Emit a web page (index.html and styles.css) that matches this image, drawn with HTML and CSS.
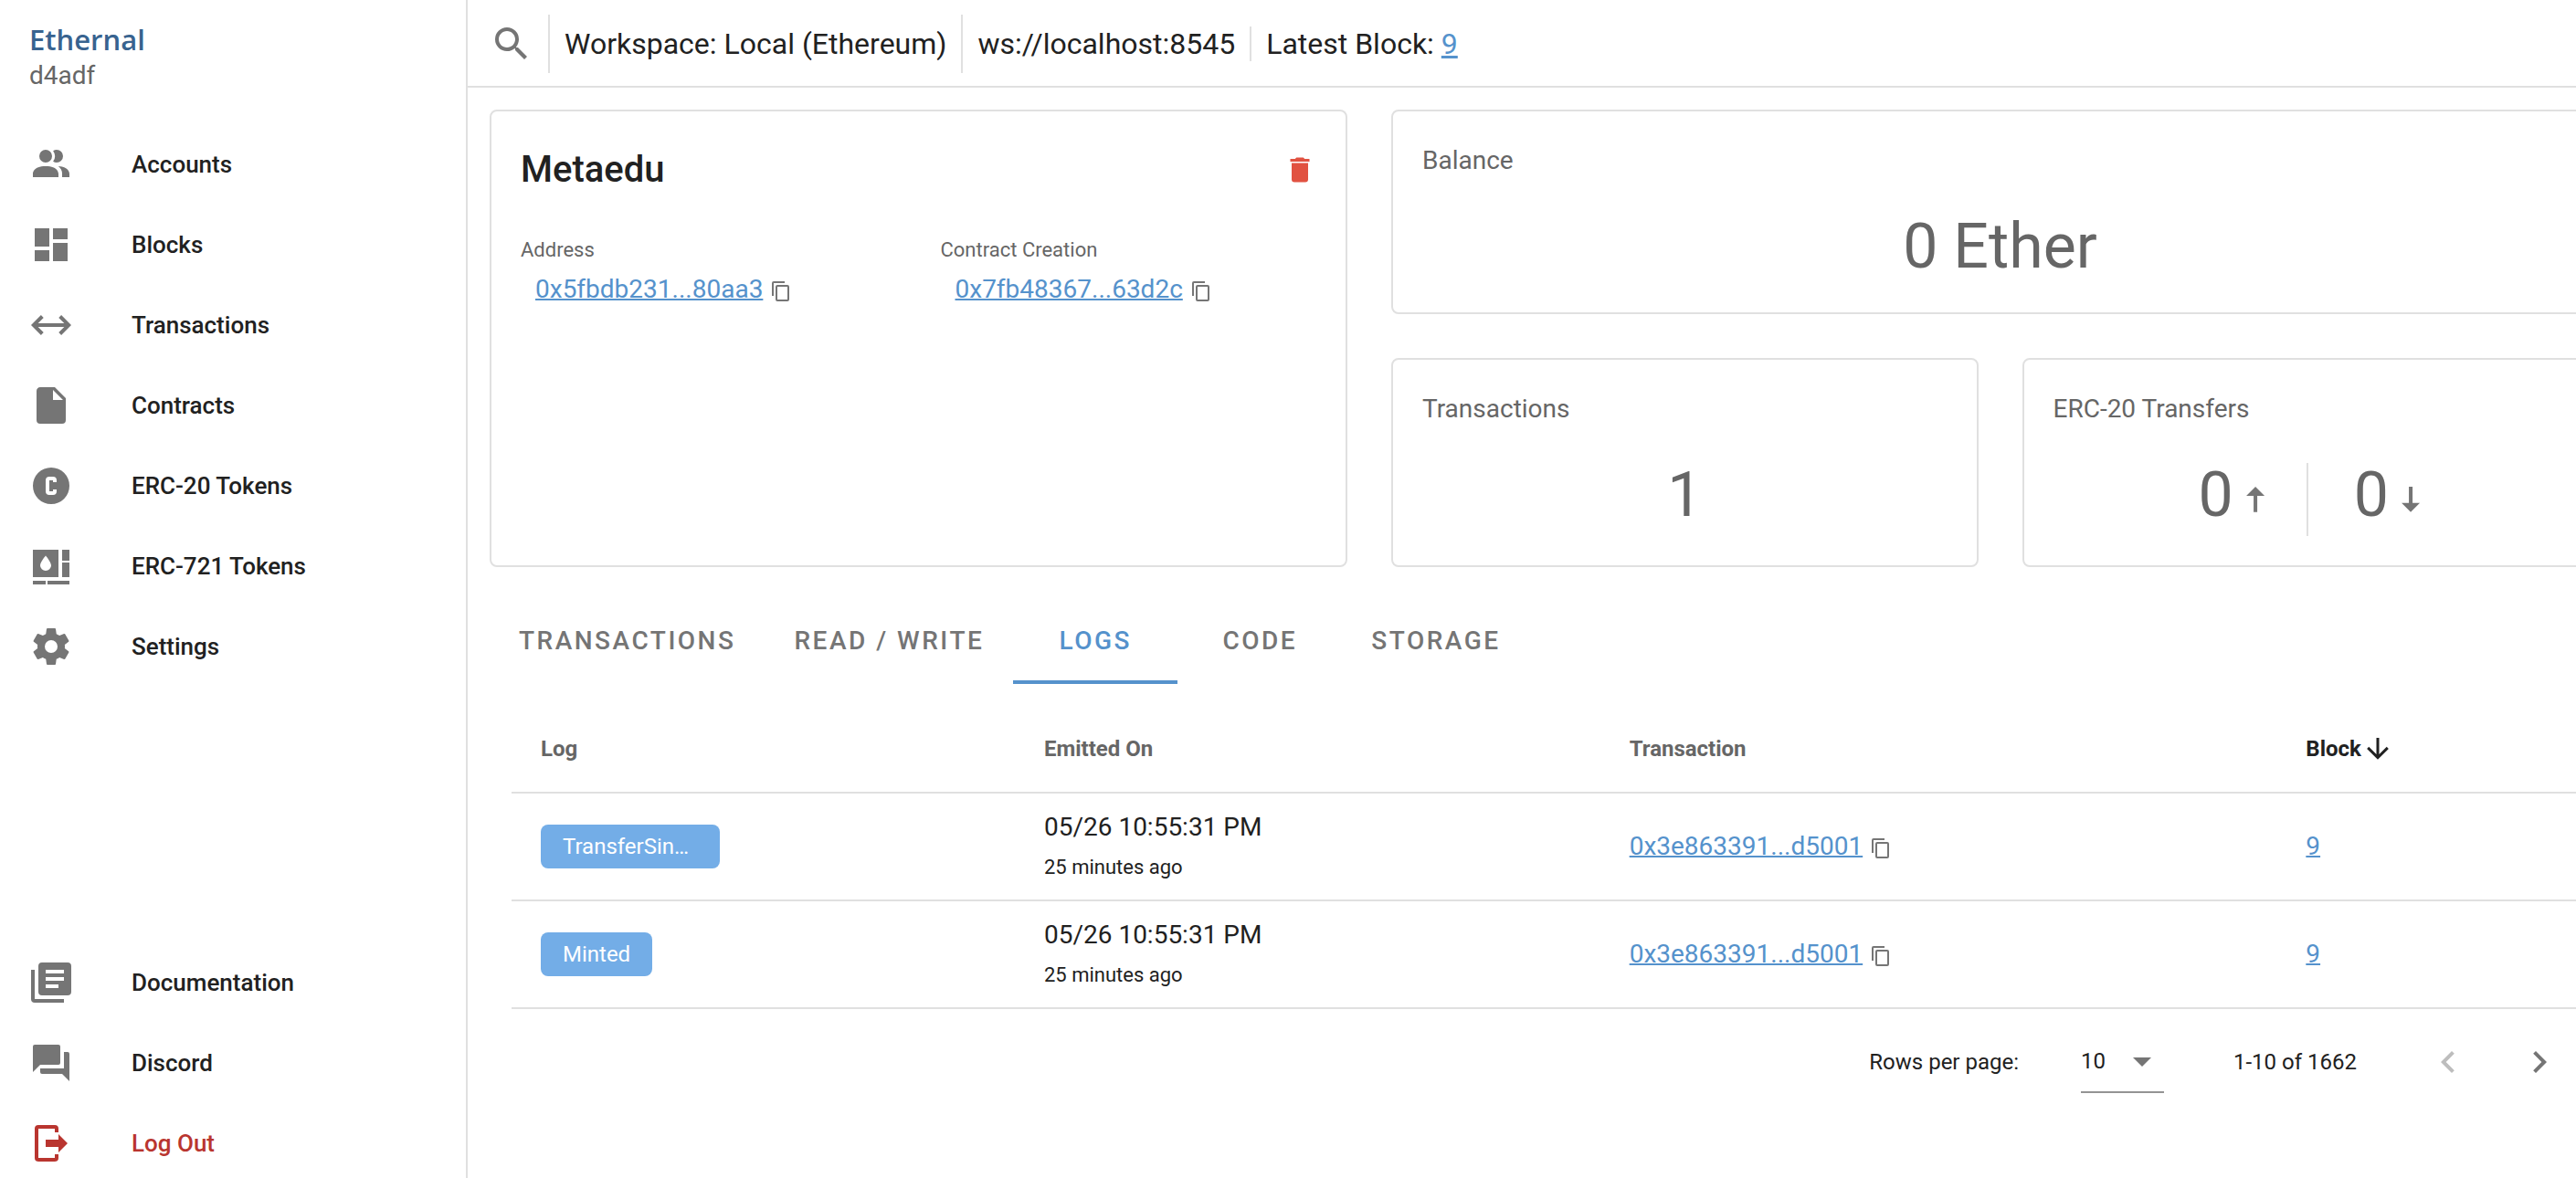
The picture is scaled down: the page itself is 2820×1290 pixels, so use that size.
FILE: index.html
```html
<!DOCTYPE html>
<html lang="en">
<head>
<meta charset="utf-8">
<meta name="viewport" content="width=device-width, initial-scale=1">
<title>Ethernal</title>
<link rel="stylesheet" href="styles.css">
</head>
<body>
<svg class="sprite" aria-hidden="true">
  <symbol id="i-copy" viewBox="0 0 24 24"><path d="M19,21H8V7H19M19,5H8A2,2 0 0,0 6,7V21A2,2 0 0,0 8,23H19A2,2 0 0,0 21,21V7A2,2 0 0,0 19,5M16,1H4A2,2 0 0,0 2,3V17H4V3H16V1Z"/></symbol>
</svg>
<div class="app">
  <aside class="sidebar">
    <div class="brand">
      <div class="brand-name">Ethernal</div>
      <div class="brand-version">d4adf</div>
    </div>
    <nav class="nav">
      <a class="nav-item" href="#accounts"><svg class="icon" viewBox="0 0 24 24"><path d="M16 17V19H2V17S2 13 9 13 16 17 16 17M12.5 7.5A3.5 3.5 0 1 0 9 11A3.5 3.5 0 0 0 12.5 7.5M15.94 13A5.32 5.32 0 0 1 18 17V19H22V17S22 13.37 15.94 13M15 4A3.39 3.39 0 0 0 13.07 4.59A5 5 0 0 1 13.07 10.41A3.39 3.39 0 0 0 15 11A3.5 3.5 0 0 0 15 4Z"/></svg>Accounts</a>
      <a class="nav-item" href="#blocks"><svg class="icon" viewBox="0 0 24 24"><path d="M13,3V9H21V3M13,21H21V11H13M3,21H11V15H3M3,13H11V3H3V13Z"/></svg>Blocks</a>
      <a class="nav-item" href="#transactions"><svg class="icon" viewBox="0 0 24 24"><path d="M6.45,17.45L1,12L6.45,6.55L7.86,7.96L4.83,11H19.17L16.14,7.96L17.55,6.55L23,12L17.55,17.45L16.14,16.04L19.17,13H4.83L7.86,16.04L6.45,17.45Z"/></svg>Transactions</a>
      <a class="nav-item" href="#contracts"><svg class="icon" viewBox="0 0 24 24"><path d="M13,9V3.5L18.5,9M6,2C4.89,2 4,2.89 4,4V20A2,2 0 0,0 6,22H18A2,2 0 0,0 20,20V8L14,2H6Z"/></svg>Contracts</a>
      <a class="nav-item" href="#erc20"><svg class="icon" viewBox="0 0 24 24"><path d="M11,7A2,2 0 0,0 9,9V15A2,2 0 0,0 11,17H13A2,2 0 0,0 15,15V14H13V15H11V9H13V10H15V9A2,2 0 0,0 13,7H11M12,2A10,10 0 0,1 22,12A10,10 0 0,1 12,22A10,10 0 0,1 2,12A10,10 0 0,1 12,2Z"/></svg>ERC-20 Tokens</a>
      <a class="nav-item" href="#erc721"><svg class="icon" viewBox="0 0 24 24"><path fill-rule="evenodd" d="M2,3H16V18H2V3M9,6.2C9,6.2 6,9.6 6,11.6A3,2.9 0 0,0 12,11.6C12,9.6 9,6.2 9,6.2M18,3H22V9H18V3M18,10H22V18H18V10M2,20H9V22H2V20M10,20H22V22H10V20Z"/></svg>ERC-721 Tokens</a>
      <a class="nav-item" href="#settings"><svg class="icon" viewBox="0 0 24 24"><path d="M12,15.5A3.5,3.5 0 0,1 8.5,12A3.5,3.5 0 0,1 12,8.5A3.5,3.5 0 0,1 15.5,12A3.5,3.5 0 0,1 12,15.5M19.43,12.97C19.47,12.65 19.5,12.33 19.5,12C19.5,11.67 19.47,11.34 19.43,11L21.54,9.37C21.73,9.22 21.78,8.95 21.66,8.73L19.66,5.27C19.54,5.05 19.27,4.96 19.05,5.05L16.56,6.05C16.04,5.66 15.5,5.32 14.87,5.07L14.5,2.42C14.46,2.18 14.25,2 14,2H10C9.75,2 9.54,2.18 9.5,2.42L9.13,5.07C8.5,5.32 7.96,5.66 7.44,6.05L4.95,5.05C4.73,4.96 4.46,5.05 4.34,5.27L2.34,8.73C2.21,8.95 2.27,9.22 2.46,9.37L4.57,11C4.53,11.34 4.5,11.67 4.5,12C4.5,12.33 4.53,12.65 4.57,12.97L2.46,14.63C2.27,14.78 2.21,15.05 2.34,15.27L4.34,18.73C4.46,18.95 4.73,19.03 4.95,18.95L7.44,17.94C7.96,18.34 8.5,18.68 9.13,18.93L9.5,21.58C9.54,21.82 9.75,22 10,22H14C14.25,22 14.46,21.82 14.5,21.58L14.87,18.93C15.5,18.67 16.04,18.34 16.56,17.94L19.05,18.95C19.27,19.03 19.54,18.95 19.66,18.73L21.66,15.27C21.78,15.05 21.73,14.78 21.54,14.63L19.43,12.97Z"/></svg>Settings</a>
    </nav>
    <nav class="nav nav-bottom">
      <a class="nav-item" href="#docs"><svg class="icon" viewBox="0 0 24 24"><path fill-rule="evenodd" d="M3,5V21H19V23H3A2,2 0 0,1 1,21V5H3M7,1H21A2,2 0 0,1 23,3V17A2,2 0 0,1 21,19H7A2,2 0 0,1 5,17V3A2,2 0 0,1 7,1M9,5V7H19V5H9M9,9V11H19V9H9M9,13V15H16V13H9Z"/></svg>Documentation</a>
      <a class="nav-item" href="#discord"><svg class="icon" viewBox="0 0 24 24"><path d="M17,12V3A1,1 0 0,0 16,2H3A1,1 0 0,0 2,3V17L6,13H16A1,1 0 0,0 17,12M21,6H19V15H6V17A1,1 0 0,0 7,18H18L22,22V7A1,1 0 0,0 21,6Z"/></svg>Discord</a>
      <a class="nav-item nav-item-danger" href="#logout"><svg class="icon" viewBox="0 0 24 24"><path d="M16,17V14H9V10H16V7L21,12L16,17M14,2A2,2 0 0,1 16,4V6H14V4H5V20H14V18H16V20A2,2 0 0,1 14,22H5A2,2 0 0,1 3,20V4A2,2 0 0,1 5,2H14Z"/></svg>Log Out</a>
    </nav>
  </aside>

  <div class="page">
    <header class="topbar">
      <button class="icon-button" type="button" aria-label="Search"><svg class="icon" viewBox="0 0 24 24"><path d="M9.5,3A6.5,6.5 0 0,1 16,9.5C16,11.11 15.41,12.59 14.44,13.73L14.71,14H15.5L20.5,19L19,20.5L14,15.5V14.71L13.73,14.44C12.59,15.41 11.11,16 9.5,16A6.5,6.5 0 0,1 3,9.5A6.5,6.5 0 0,1 9.5,3M9.5,5C7,5 5,7 5,9.5C5,12 7,14 9.5,14C12,14 14,12 14,9.5C14,7 12,5 9.5,5Z"/></svg></button>
      <span class="divider"></span>
      <span>Workspace: Local (Ethereum)</span>
      <span class="divider"></span>
      <span>ws://localhost:8545</span>
      <span class="divider divider-short"></span>
      <span>Latest Block: <a class="latest" href="#block-9">9</a></span>
    </header>

    <main class="content">
      <section class="overview">
        <article class="card">
          <div class="card-head">
            <h1 class="card-title">Metaedu</h1>
            <button class="icon-button delete" type="button" aria-label="Delete contract"><svg class="icon icon-md" viewBox="0 0 24 24"><path d="M19,4H15.5L14.5,3H9.5L8.5,4H5V6H19M6,19A2,2 0 0,0 8,21H16A2,2 0 0,0 18,19V7H6V19Z"/></svg></button>
          </div>
          <dl class="facts">
            <div>
              <dt>Address</dt>
              <dd><a href="#address">0x5fbdb231...80aa3</a><button class="icon-button copy" type="button" aria-label="Copy address"><svg class="icon icon-sm"><use href="#i-copy"/></svg></button></dd>
            </div>
            <div>
              <dt>Contract Creation</dt>
              <dd><a href="#creation">0x7fb48367...63d2c</a><button class="icon-button copy" type="button" aria-label="Copy transaction hash"><svg class="icon icon-sm"><use href="#i-copy"/></svg></button></dd>
            </div>
          </dl>
        </article>
        <div class="stats">
          <article class="card stat-wide">
            <h2 class="stat-label">Balance</h2>
            <div class="stat-value">0 Ether</div>
          </article>
          <article class="card">
            <h2 class="stat-label">Transactions</h2>
            <div class="stat-value">1</div>
          </article>
          <article class="card">
            <h2 class="stat-label">ERC-20 Transfers</h2>
            <div class="stat-value">
              <span>0</span><svg class="icon stat-icon" viewBox="0 0 24 24"><path d="M7.03,9.97H11.03V18.89L13.04,18.92V9.97H17.03L12.03,4.97Z"/></svg>
              <span class="stat-divider"></span>
              <span>0</span><svg class="icon stat-icon" viewBox="0 0 24 24"><path d="M7.03,13.92H11.03V5L13.04,4.97V13.92H17.03L12.03,18.92Z"/></svg>
            </div>
          </article>
        </div>
      </section>

      <div class="tabs" role="tablist">
        <button class="tab" type="button" role="tab">TRANSACTIONS</button>
        <button class="tab" type="button" role="tab">READ / WRITE</button>
        <button class="tab tab-active" type="button" role="tab" aria-selected="true">LOGS</button>
        <button class="tab" type="button" role="tab">CODE</button>
        <button class="tab" type="button" role="tab">STORAGE</button>
      </div>

      <section class="logs">
        <table class="log-table">
          <colgroup><col class="col-log"><col class="col-date"><col class="col-tx"><col></colgroup>
          <thead>
            <tr>
              <th scope="col">Log</th>
              <th scope="col">Emitted On</th>
              <th scope="col">Transaction</th>
              <th scope="col" class="sorted" aria-sort="descending"><span class="sort">Block<svg class="icon icon-md" viewBox="0 0 24 24"><path d="M11,4H13V16L18.5,10.5L19.92,11.92L12,19.84L4.08,11.92L5.5,10.5L11,16V4Z"/></svg></span></th>
            </tr>
          </thead>
          <tbody>
            <tr>
              <td><span class="chip chip-long">TransferSin…</span></td>
              <td class="date">05/26 10:55:31 PM<div class="ago">25 minutes ago</div></td>
              <td><a href="#tx-1">0x3e863391...d5001</a><button class="icon-button copy" type="button" aria-label="Copy transaction hash"><svg class="icon icon-sm"><use href="#i-copy"/></svg></button></td>
              <td><a href="#block-9">9</a></td>
            </tr>
            <tr>
              <td><span class="chip">Minted</span></td>
              <td class="date">05/26 10:55:31 PM<div class="ago">25 minutes ago</div></td>
              <td><a href="#tx-2">0x3e863391...d5001</a><button class="icon-button copy" type="button" aria-label="Copy transaction hash"><svg class="icon icon-sm"><use href="#i-copy"/></svg></button></td>
              <td><a href="#block-9">9</a></td>
            </tr>
          </tbody>
        </table>
        <footer class="pager">
          <label for="rows">Rows per page:</label>
          <div class="select">
            <select id="rows"><option>10</option><option>25</option><option>50</option></select>
            <svg class="icon select-arrow" viewBox="0 0 24 24"><path d="M7,10L12,15L17,10H7Z"/></svg>
          </div>
          <span class="range">1-10 of 1662</span>
          <button class="icon-button page-button" type="button" disabled aria-label="Previous page"><svg class="icon" viewBox="0 0 24 24"><path d="M15.41,16.58L10.83,12L15.41,7.41L14,6L8,12L14,18L15.41,16.58Z"/></svg></button>
          <button class="icon-button page-button" type="button" aria-label="Next page"><svg class="icon" viewBox="0 0 24 24"><path d="M8.59,16.58L13.17,12L8.59,7.41L10,6L16,12L10,18L8.59,16.58Z"/></svg></button>
        </footer>
      </section>
    </main>
  </div>
</div>
</body>
</html>
```
FILE: styles.css
```css
:root {
  --text: #212121;
  --muted: #666666;
  --icon: #757575;
  --line: #e0e0e0;
  --primary: #5592cc;
}

* {
  box-sizing: border-box;
}

body {
  margin: 0;
  background: #fff;
  color: var(--text);
  font-family: Roboto, "Liberation Sans", sans-serif;
  font-size: 28px;
  line-height: 44px;
}

h1, h2, dl, dd {
  margin: 0;
}

a {
  color: var(--primary);
  text-decoration-thickness: 2px;
}

button, select {
  font: inherit;
  color: inherit;
}

.sprite {
  display: none;
}

.icon {
  display: block;
  flex: none;
  width: 48px;
  height: 48px;
  fill: currentColor;
}

.icon-md {
  width: 36px;
  height: 36px;
}

.icon-sm {
  width: 24px;
  height: 24px;
}

.icon-button {
  display: inline-flex;
  padding: 0;
  border: 0;
  background: none;
  color: var(--icon);
}

.app {
  display: flex;
  min-height: 100vh;
}

/* Sidebar */

.sidebar {
  display: flex;
  flex-direction: column;
  flex: none;
  width: 512px;
  border-right: 2px solid var(--line);
}

.brand {
  padding: 23px 32px 39px;
  line-height: 40px;
}

.brand-name {
  color: #38638f;
  font-family: "Open Sans", "Noto Sans", sans-serif;
  font-size: 31px;
  font-weight: 600;
}

.brand-version {
  color: var(--muted);
}

.nav {
  display: flex;
  flex-direction: column;
  gap: 12px;
}

.nav-bottom {
  margin-top: auto;
}

.nav-item {
  display: flex;
  align-items: center;
  gap: 64px;
  height: 76px;
  padding: 0 32px;
  color: var(--text);
  font-size: 26px;
  font-weight: 500;
  text-decoration: none;
}

.nav-item .icon {
  color: var(--icon);
}

.nav-item-danger,
.nav-item-danger .icon {
  color: #b9352f;
}

/* Top bar */

.page {
  flex: 1;
  min-width: 0;
  overflow: hidden;
}

.topbar {
  display: flex;
  align-items: center;
  gap: 16px;
  height: 96px;
  padding: 2px 24px 0;
  border-bottom: 2px solid var(--line);
  font-size: 32px;
  white-space: nowrap;
}

.divider {
  width: 2px;
  height: 64px;
  background: var(--line);
}

.divider-short {
  height: 38px;
}

.latest {
  text-decoration-thickness: 3px;
}

/* The content runs on past the right edge of the window */
.content {
  margin-right: -60px;
  padding: 24px;
}

/* Overview cards */

.overview {
  display: grid;
  grid-template-columns: 939fr 1333fr;
  gap: 48px;
}

.stats {
  display: grid;
  grid-template-columns: 1fr 1fr;
  gap: 48px;
}

.stat-wide {
  grid-column: 1 / -1;
}

.card {
  padding: 32px;
  border: 2px solid var(--line);
  border-radius: 8px;
}

.card-head {
  display: flex;
  align-items: center;
  justify-content: space-between;
  margin-bottom: 34px;
}

.card-title {
  font-size: 40px;
  font-weight: 500;
  line-height: 64px;
}

.delete {
  color: #e15241;
}

.facts {
  display: grid;
  grid-template-columns: 1fr 1fr;
  gap: 48px;
}

.facts dt {
  color: var(--muted);
  font-size: 22px;
}

.facts dd {
  padding-left: 16px;
  line-height: 42px;
}

.copy {
  margin-left: 8px;
  vertical-align: -5px;
}

.stat-label {
  margin-bottom: 32px;
  color: var(--muted);
  font-size: 28px;
  font-weight: 400;
}

.stat-value {
  display: flex;
  align-items: flex-start;
  justify-content: center;
  color: var(--muted);
  font-size: 68px;
  line-height: 80px;
}

.stat-icon {
  margin-top: 21px;
  color: var(--icon);
}

.stat-divider {
  width: 2px;
  height: 80px;
  margin: 5px 50px 0 32px;
  background: var(--line);
}

/* Tabs */

.tabs {
  display: flex;
  margin-top: 32px;
}

.tab {
  min-width: 180px;
  height: 96px;
  padding: 6px 32px 0;
  border: 0;
  border-bottom: 4px solid transparent;
  background: none;
  color: var(--icon);
  font-weight: 500;
  letter-spacing: 0.0893em;
}

.tab-active {
  border-bottom-color: var(--primary);
  color: var(--primary);
}

/* Logs table */

.logs {
  padding: 22px 24px 0;
}

.log-table {
  width: 100%;
  border-collapse: separate;
  border-spacing: 0;
  table-layout: fixed;
}

.col-log {
  width: 24.25%;
}

.col-date {
  width: 28.2%;
}

.col-tx {
  width: 32.6%;
}

.log-table th,
.log-table td {
  padding: 0 32px;
  border-bottom: 2px solid var(--line);
  text-align: left;
  white-space: nowrap;
}

.log-table th {
  height: 98px;
  padding-top: 2px;
  color: var(--muted);
  font-size: 24px;
  font-weight: 700;
}

.log-table td {
  height: 118px;
}

.log-table .date {
  padding-top: 2px;
}

.log-table .sorted {
  color: var(--text);
}

.sort {
  display: flex;
  align-items: center;
}

.ago {
  font-size: 22px;
}

.chip {
  display: block;
  width: fit-content;
  padding: 0 24px;
  border-radius: 8px;
  background: #73ade7;
  color: #fff;
  font-size: 24px;
  line-height: 48px;
}

.chip-long {
  width: 196px;
}

/* Pagination */

.pager {
  display: flex;
  align-items: center;
  justify-content: flex-end;
  height: 116px;
  padding-right: 28px;
  font-size: 24px;
}

.select {
  display: grid;
  align-items: center;
  width: 91px;
  height: 68px;
  margin: 0 76px 0 68px;
  border-bottom: 2px solid #949494;
}

.select select,
.select-arrow {
  grid-area: 1 / 1;
}

.select select {
  width: 100%;
  padding: 0;
  border: 0;
  background: none;
  appearance: none;
}

.select-arrow {
  justify-self: end;
  color: var(--icon);
  pointer-events: none;
}

.range {
  margin-right: 76px;
}

.page-button + .page-button {
  margin-left: 52px;
}

.page-button:disabled {
  color: #bdbdbd;
}
```
